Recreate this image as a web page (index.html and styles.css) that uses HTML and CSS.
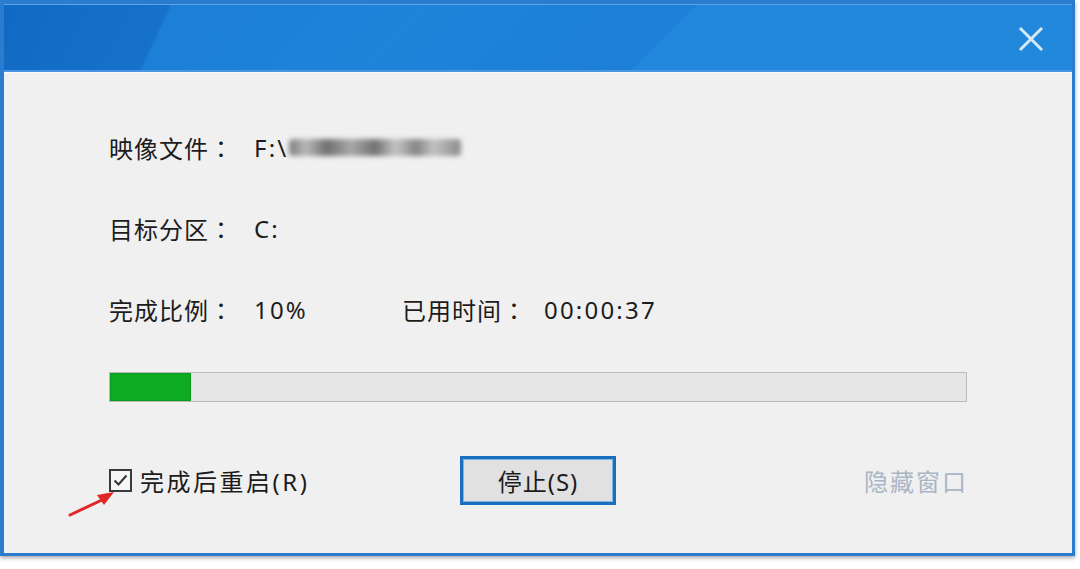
FILE: index.html
```html
<!DOCTYPE html>
<html>
<head>
<meta charset="utf-8">
<link rel="stylesheet" href="styles.css">
</head>
<body>
<div class="window">
  <div class="titlebar">
    <svg class="close" width="26" height="26" viewBox="0 0 26 26"><path d="M3 3 L23 23 M23 3 L3 23" stroke="#d3e9f8" stroke-width="3" stroke-linecap="square"/></svg>
  </div>
  <div class="content">
    <div class="row">
      <span class="label">映像文件<span class="colon">：</span></span>
      <span class="value">F:\<span class="blur"></span></span>
    </div>
    <div class="row">
      <span class="label">目标分区<span class="colon">：</span></span>
      <span class="value">C:</span>
    </div>
    <div class="row">
      <span class="label">完成比例<span class="colon">：</span></span>
      <span class="value val-narrow">10%</span>
      <span class="label label2">已用时间<span class="colon">：</span></span>
      <span class="value">00:00:37</span>
    </div>
    <div class="progress"><div class="fill" style="width:81px"></div></div>
    <div class="actions">
      <label class="check">
        <span class="box"><svg width="19" height="19" viewBox="0 0 19 19"><path d="M3.5 9.5 L7.5 13.5 L15.5 4.5" fill="none" stroke="#333" stroke-width="2"/></svg></span>
        <span class="check-text">完成后重启(R)</span>
      </label>
      <button class="btn">停止(S)</button>
      <span class="hide">隐藏窗口</span>
    </div>
    <svg class="arrow" width="60" height="40" viewBox="0 0 60 40">
      <path d="M6 36 L40 20" stroke="#e02626" stroke-width="3" stroke-linecap="round"/>
      <path d="M50 13 L33 16 L40 26 Z" fill="#e02626"/>
    </svg>
  </div>
</div>
</body>
</html>
```
FILE: styles.css
```css
html, body {
  margin: 0;
  padding: 0;
  background: #ffffff;
  width: 1080px;
  height: 569px;
  overflow: hidden;
}
.window {
  width: 1075px;
  height: 556px;
  box-sizing: border-box;
  background: #2a7ccf;
  padding: 4px 3px 3px 4px;
  display: flex;
  flex-direction: column;
  box-shadow: 0 2px 4px rgba(0,0,0,0.35);
  position: relative;
}
.titlebar {
  height: 65px;
  flex: none;
  border-top: 1px solid #5da3e8;
  border-bottom: 2px solid #4a95e2;
  background:
    linear-gradient(115deg, #106ac3 0px, #1672c9 150px, transparent 153px),
    linear-gradient(134.6deg, #1b7cd6 0px, #1f83da 300px, #1d7fd8 491px, transparent 495px),
    #2188dc;
  display: flex;
  justify-content: flex-end;
  align-items: center;
  padding-right: 28px;
}
.close { display: block; margin-top: 2px; }
.content {
  flex: 1;
  background: #f0f0f0;
  border-top: 1px solid #f8fbfd;
  padding: 58px 0 0 105px;
  font-family: "Noto Sans", "Noto Sans CJK SC", sans-serif;
  font-size: 24px;
  color: #1c1c1c;
  letter-spacing: 1px;
  position: relative;
}
.row {
  display: flex;
  align-items: center;
  height: 32px;
  margin-bottom: 49px;
}
.label { width: 145px; flex: none; font-family: "Noto Sans CJK SC", sans-serif; }
.colon { font-family: "Noto Sans CJK TC", sans-serif; }
.value { display: flex; align-items: center; letter-spacing: 2.2px; }
.val-narrow { width: 148px; flex: none; }
.label2 { width: 142px; }
.blur {
  display: inline-block;
  width: 172px;
  height: 17px;
  margin-left: 1px;
  background: linear-gradient(90deg, #7d7d7d 0, #b8b8b8 10%, #6f6f6f 22%, #a9a9a9 36%, #727272 50%, #c4c4c4 62%, #858585 74%, #c2c2c2 84%, #8a8a8a 100%);
  filter: blur(2.5px);
  border-radius: 4px;
}
.progress {
  width: 856px;
  height: 28px;
  border: 1px solid #bcbcbc;
  background: #e6e6e6;
  margin-top: -2px;
}
.fill {
  height: 100%;
  background: #0cab22;
  box-shadow: inset 0 0 0 1px #0a9a1e;
}
.actions {
  width: 858px;
  margin-top: 54px;
  display: grid;
  grid-template-columns: 1fr auto 1fr;
  align-items: center;
}
.check { display: flex; align-items: center; gap: 8px; justify-self: start; }
.check-text { letter-spacing: 2.5px; }
.box {
  width: 19px;
  height: 19px;
  border: 2px solid #3a3a3a;
  background: #f6f6f6;
  display: block;
}
.box svg { display: block; }
.btn {
  width: 156px;
  height: 49px;
  box-sizing: border-box;
  border: 3px solid #1a6fbf;
  box-shadow: inset 0 0 0 1px #7fb4e6;
  background: #e1e1e1;
  font-family: "Noto Sans", "Noto Sans CJK SC", sans-serif;
  font-size: 24px;
  letter-spacing: 1px;
  color: #1c1c1c;
  padding: 0;
}
.hide {
  justify-self: end;
  color: #a8b6c6;
  letter-spacing: 2px;
  margin-right: -1px;
  font-family: "Noto Sans CJK SC", sans-serif;
}
.arrow {
  position: absolute;
  left: 60px;
  top: 406px;
}
```
